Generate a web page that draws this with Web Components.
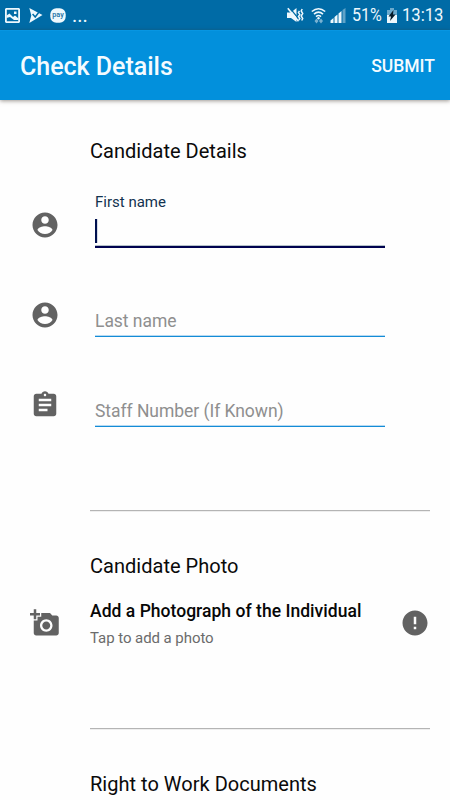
<!DOCTYPE html>
<html lang="en">
<head>
<meta charset="utf-8">
<title>Check Details</title>
<style>
html,body{margin:0;height:100%;overflow:hidden;background:#fefefe}
body{font-family:Roboto,"Liberation Sans",sans-serif;color:#0a0a0a}
</style>
</head>
<body>
<check-screen></check-screen>
<script>
const define = (name, markup, setup) => customElements.define(name, class extends HTMLElement {
  connectedCallback() {
    if (this.shadowRoot) return;
    const root = this.attachShadow({mode: 'open'});
    const t = document.createElement('template');
    t.innerHTML = markup;
    root.append(t.content.cloneNode(true));
    if (setup) setup(this, root);
  }
});

const icons = {
  person: '<path d="M12 2C6.48 2 2 6.48 2 12s4.48 10 10 10 10-4.48 10-10S17.52 2 12 2zm0 3c1.66 0 3 1.34 3 3s-1.34 3-3 3-3-1.34-3-3 1.34-3 3-3zm0 14.2c-2.5 0-4.71-1.28-6-3.22.03-1.99 4-3.08 6-3.08 1.99 0 5.97 1.09 6 3.08-1.29 1.94-3.5 3.22-6 3.22z"/>',
  assignment: '<path d="M19 3h-4.18C14.4 1.84 13.3 1 12 1c-1.3 0-2.4.84-2.82 2H5c-1.1 0-2 .9-2 2v14c0 1.1.9 2 2 2h14c1.1 0 2-.9 2-2V5c0-1.1-.9-2-2-2zm-7 0c.55 0 1 .45 1 1s-.45 1-1 1-1-.45-1-1 .45-1 1-1zm2 14H7v-2h7v2zm3-4H7v-2h10v2zm0-4H7V7h10v2z"/>',
  camera: '<path d="M3 4V1h2v3h3v2H5v3H3V6H0V4h3zm3 6V7h3V4h7l1.83 2H21c1.1 0 2 .9 2 2v12c0 1.1-.9 2-2 2H5c-1.1 0-2-.9-2-2V10h3zm7 9c2.76 0 5-2.24 5-5s-2.24-5-5-5-5 2.24-5 5 2.24 5 5 5zm-3.2-5c0 1.77 1.43 3.2 3.2 3.2s3.2-1.43 3.2-3.2-1.43-3.2-3.2-3.2-3.2 1.43-3.2 3.2z"/>',
  error: '<path d="M12 2C6.48 2 2 6.48 2 12s4.48 10 10 10 10-4.48 10-10S17.52 2 12 2zm1 15h-2v-2h2v2zm0-4h-2V7h2v6z"/>'
};

define('md-icon', `<style>
:host{display:block;width:30px;height:30px;color:#626262}
svg{display:block;width:100%;height:100%;fill:currentColor}
</style><svg viewBox="0 0 24 24"></svg>`,
(el, root) => { root.querySelector('svg').innerHTML = icons[el.getAttribute('name')]; });

define('status-bar', `<style>
:host{display:flex;align-items:center;height:30px;background:#006ba6;color:#eef8fd;font-size:18.5px;line-height:30px}
svg{display:block;flex:none;fill:currentColor}
.left{display:flex;align-items:center;padding-left:5px;flex:1}
.right{display:flex;align-items:center}
.dots{display:flex;gap:3px;margin:11px 0 0 7px}
.dots{font-size:20px;line-height:1px;height:1px;margin:0 0 0 6px;align-items:center}
.pct,.time{display:block;white-space:nowrap}
.pct{width:31px;margin-left:6px}
.time{width:42px;margin-left:5px;margin-right:6px}
.pct span,.time span{display:inline-block;transform-origin:0 50%}
.pct span{transform:scaleX(.87)}
.time span{transform:scaleX(.9)}
</style>
<div class="left">
<svg width="15" height="15" viewBox="0 0 15 15"><path fill-rule="evenodd" d="M1 0h13l1 1v13l-1 1H1l-1-1V1zM1.800 1.800v11.400h11.400V1.800z"/><path d="M1.500 10V7.500l3-2 3.500 3.500 2-1.500 3.500 3V12H9L5 9z"/><rect x="9" y="3.500" width="2.500" height="2.500"/></svg>
<svg width="14" height="15" viewBox="0 0 14 15" style="margin-left:9px"><path d="M.3 0 13.500 7 .3 15 2.300 7.500z"/><path d="m3.600 6 2.600 3L10.800 3" fill="none" stroke="#006ba6" stroke-width="1.500"/></svg>
<svg width="16" height="15" viewBox="0 0 16 15" style="margin-left:7px"><rect x=".3" y=".2" width="15.400" height="14.600" rx="6"/><text x="8" y="9.200" text-anchor="middle" font-family="Roboto" font-size="7" font-weight="500" fill="#176fa1" textLength="11.500" lengthAdjust="spacingAndGlyphs">pay</text></svg>
<span class="dots">...</span></div>
<div class="right">
<svg width="17" height="16" viewBox="0 0 17 16"><path d="M0 5.500h4L9.500 1v14L4 11H0z"/><path d="m2 0 11 13.500" stroke="#006ba6" stroke-width="1.200"/><path d="m.8 1.200 10.700 13" fill="none" stroke="currentColor" stroke-width="1.600"/><path d="M12.500 4l-1 1.500 1.300 2-1.300 2 1.300 2-1 1.500M15.200 2l-1 2 1.500 2.500-1.500 2.500 1.500 2.500-1 2" fill="none" stroke="currentColor" stroke-width="1.500"/></svg>
<svg width="15" height="17" viewBox="0 0 15 17" style="margin-left:7px"><g fill="none" stroke="currentColor" stroke-width="1.600"><path d="M.8 4.500Q7.500-1 14.200 4.500M3 7.200q4.500-4 9 0M5 9.600q2.500-2.200 5 0"/></g><circle cx="7.500" cy="11.300" r="1.200"/><path opacity=".5" d="m3.500 14 2-2.500 2 2.500-2 2.500zM8 14l2-2.500 2 2.500-2 2.500z"/></svg>
<svg width="16" height="15" viewBox="0 0 16 15" style="margin-left:4px"><path opacity=".4" d="M12.500 2 15.500 0v15h-3z"/><path d="M8.500 5.500 11.500 3v12h-3zM4.500 9l3-2.500V15h-3zM.5 12.500l3-2.500v5h-3z"/></svg>
<div class="pct"><span>51%</span></div>
<svg width="10" height="15" viewBox="0 0 10 15" style="margin-left:4px"><path opacity=".45" d="M3 0h4v2h3v5H0V2h3z"/><path d="M0 7h10v8H0z"/><path fill="#071b28" d="M6.500 2 1.500 8.500H4L3 13l5.500-6.500H6z"/></svg>
<div class="time"><span>13:13</span></div>
</div>`);

define('app-bar', `<style>
:host{display:flex;align-items:center;justify-content:space-between;box-sizing:border-box;height:70px;padding:3px 15px 0 20px;background:#0290dc;color:#f4fbff;font-weight:500;border-top:1px solid #0796e2;box-shadow:0 1px 4px rgba(60,50,40,.5)}
.title{font-size:25px;line-height:30px;letter-spacing:-.02px}
.action{font-size:17.5px;line-height:24px;padding-bottom:2px}
</style><div class="title"><slot></slot></div><div class="action"><slot name="action"></slot></div>`);

define('form-section', `<style>
:host{display:block;box-sizing:border-box;padding-top:var(--top,40px)}
h2{margin:0 0 0 90px;font-size:20px;line-height:30px;font-weight:400;letter-spacing:.02px}
.end{height:1px;margin:var(--gap,60px) 20px 0 90px;background:#b4b4b4;box-shadow:0 1px #eee}
:host([last]) .end{display:none}
</style><h2></h2><slot></slot><div class="end"></div>`,
(el, root) => { root.querySelector('h2').textContent = el.getAttribute('heading'); });

define('text-field', `<style>
:host{display:grid;grid-template-columns:95px 290px;height:90px}
md-icon{margin:30px 0 0 30px}
.body{display:flex;flex-direction:column}
.label{height:24px;padding-top:10px;font-size:15px;line-height:24px;color:#12324f}
.caret{width:2px;height:24px;margin:5px 0 2px;background:#00104f;box-shadow:1px 0 #d5dbe6}
.hint{padding-top:38px;height:27px;font-size:17.5px;line-height:26px;letter-spacing:-.04px;color:#8f8f8f;white-space:nowrap}
.line{height:1px;background:#148cd6;border-top:1px solid #b5d9f2}
:host([focused]) .line{height:2px;background:#00024f;border-color:#b5c2c8}
</style><md-icon></md-icon><div class="body"></div>`,
(el, root) => {
  root.querySelector('md-icon').replaceWith(Object.assign(document.createElement('div'), {
    innerHTML: `<md-icon name="${el.getAttribute('icon')}"></md-icon>`}));
  const text = el.getAttribute('label');
  root.querySelector('.body').innerHTML = el.hasAttribute('focused')
    ? `<div class="label">${text}</div><div class="caret"></div><div class="line"></div>`
    : `<div class="hint">${text}</div><div class="line"></div>`;
});

define('photo-row', `<style>
:host{display:grid;grid-template-columns:90px 1fr 50px;height:60px;padding-top:17px}
md-icon{margin-top:10px}
.lead{margin-left:30px}
.a{font-size:17.5px;line-height:24px;letter-spacing:.03px;font-weight:500;color:#070707;margin-top:1px}
.b{font-size:15px;line-height:22px;letter-spacing:-.06px;color:#6b6b6b;margin-top:4px}
</style><md-icon class="lead" name="camera"></md-icon><div><div class="a"><slot></slot></div><div class="b"><slot name="detail"></slot></div></div><md-icon name="error"></md-icon>`);

define('check-screen', `<style>
:host{display:flex;flex-direction:column;height:800px;overflow:hidden}
app-bar,status-bar,form-section{flex:none}
app-bar{z-index:1}
.first{--top:36px}
.first text-field:first-of-type{margin-top:14px}
.second{--gap:70px}
</style>
<status-bar></status-bar>
<app-bar>Check Details<span slot="action">SUBMIT</span></app-bar>
<form-section class="first" heading="Candidate Details">
<text-field icon="person" label="First name" focused></text-field>
<text-field icon="person" label="Last name"></text-field>
<text-field icon="assignment" label="Staff Number (If Known)"></text-field>
</form-section>
<form-section class="second" heading="Candidate Photo">
<photo-row>Add a Photograph of the Individual<span slot="detail">Tap to add a photo</span></photo-row>
</form-section>
<form-section last heading="Right to Work Documents"></form-section>`);
</script>
</body>
</html>
